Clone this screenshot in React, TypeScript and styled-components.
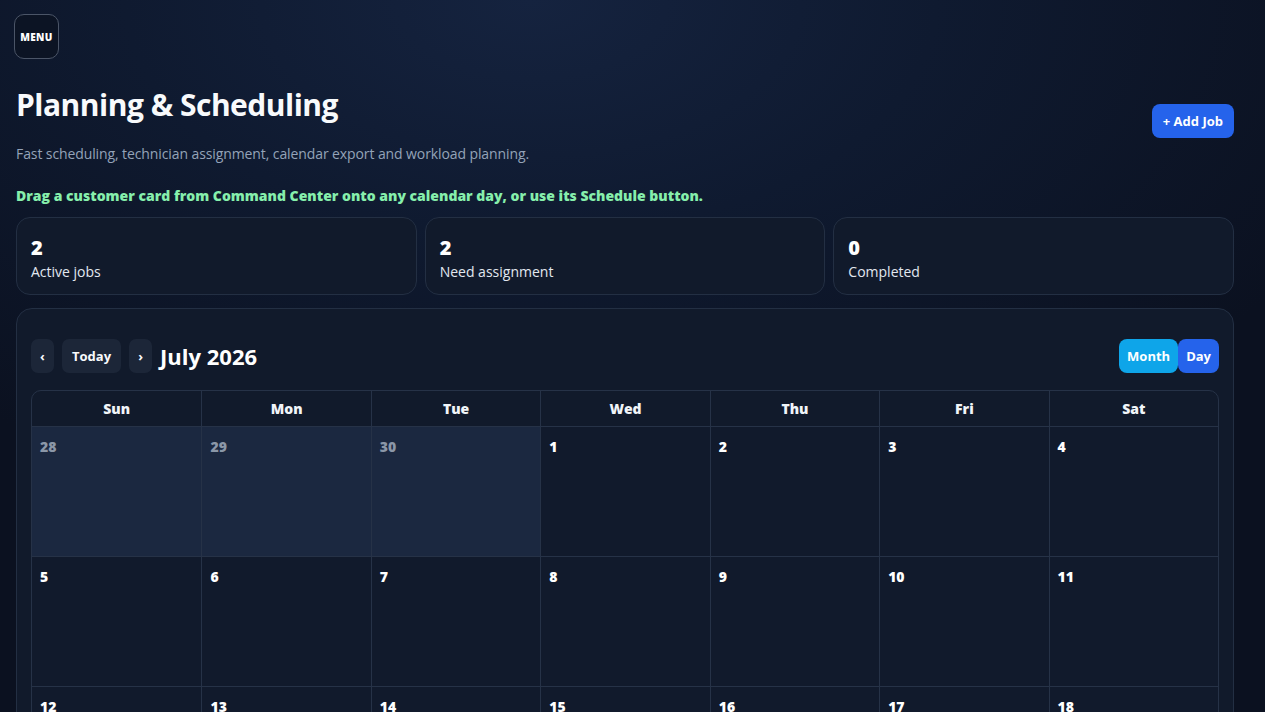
import React from 'react';
import styled, { createGlobalStyle } from 'styled-components';

const GlobalStyle = createGlobalStyle`
  html, body {
    margin: 0;
    padding: 0;
  }
  body {
    min-height: 100vh;
    background-color: #0b1120;
    background-image: radial-gradient(ellipse 900px 520px at 42% 0%, #15233f 0%, #0f1a30 45%, #0b1120 100%);
    background-repeat: no-repeat;
    color: #f1f5f9;
    font-family: 'Open Sans', 'Noto Sans', sans-serif;
  }
  * {
    box-sizing: border-box;
  }
`;

// right padding leaves room for the 15px page scrollbar of the reference
const Page = styled.div`
  min-height: 1440px;
  padding: 14px 31px 40px 16px;
`;

const MenuButton = styled.button`
  width: 45px;
  height: 45px;
  margin-left: -2px;
  border-radius: 10px;
  border: 1px solid #4b5567;
  background: #0c1424;
  color: #ffffff;
  font-family: 'Open Sans', sans-serif;
  font-weight: 800;
  font-size: 10px;
  letter-spacing: 0.3px;
  padding: 0;
`;

const Header = styled.header`
  display: flex;
  justify-content: space-between;
  align-items: flex-start;
  margin-top: 23px;
`;

const Title = styled.h1`
  margin: 0;
  font-size: 30px;
  font-weight: 700;
  line-height: 46px;
  color: #f8fafc;
  letter-spacing: -0.5px;
`;

const Subtitle = styled.p`
  margin: 16px 0 0;
  font-size: 14px;
  color: #94a3b8;
  line-height: 20px;
  letter-spacing: -0.1px;
`;

const Hint = styled.p`
  margin: 22px 0 0;
  font-size: 14px;
  font-weight: 800;
  color: #86efac;
  line-height: 20px;
`;

const PrimaryButton = styled.button`
  height: 34px;
  padding: 0 11px;
  border: none;
  border-radius: 8px;
  background: #2563eb;
  color: #ffffff;
  font-family: 'Open Sans', sans-serif;
  font-weight: 700;
  font-size: 13px;
  margin-top: 22px;
`;

const Stats = styled.div`
  display: grid;
  grid-template-columns: repeat(3, 1fr);
  gap: 8px;
  margin-top: 11px;
`;

const StatCard = styled.div`
  height: 78px;
  padding: 17px 14px 0;
  border-radius: 14px;
  border: 1px solid #232f43;
  background: #111a2b;
`;

const StatValue = styled.div`
  font-size: 20px;
  font-weight: 800;
  line-height: 26px;
  color: #ffffff;
`;

const StatLabel = styled.div`
  margin-top: 1px;
  font-size: 14px;
  line-height: 20px;
  color: #e2e8f0;
`;

const Panel = styled.section`
  margin-top: 13px;
  padding: 30px 14px 14px;
  border-radius: 16px;
  border: 1px solid #232f43;
  background: #111a2b;
`;

const Toolbar = styled.div`
  display: flex;
  align-items: center;
  justify-content: space-between;
`;

const NavGroup = styled.div`
  display: flex;
  align-items: center;
  gap: 8px;
`;

const NavButton = styled.button<{ $wide?: boolean }>`
  height: 34px;
  min-width: 23px;
  padding: ${p => (p.$wide ? '0 10px' : '0 8px')};
  border: none;
  border-radius: 7px;
  background: #1c2638;
  color: #f8fafc;
  font-family: 'Open Sans', sans-serif;
  font-weight: 700;
  font-size: 13px;
`;

const MonthTitle = styled.h2`
  margin: 0;
  font-size: 22px;
  font-weight: 700;
  color: #ffffff;
`;

const ViewToggle = styled.div`
  display: flex;
`;

const ViewButton = styled.button<{ $active?: boolean }>`
  height: 34px;
  padding: 0 8px;
  border: none;
  border-radius: 8px;
  background: ${p => (p.$active ? '#0ea5e9' : '#2563eb')};
  color: #ffffff;
  font-family: 'Open Sans', sans-serif;
  font-weight: 700;
  font-size: 13px;
`;

const Grid = styled.div`
  margin-top: 17px;
  display: grid;
  grid-template-columns: repeat(7, 1fr);
  border: 1px solid #263247;
  border-radius: 10px;
  overflow: hidden;
`;

const HeadCell = styled.div`
  height: 36px;
  display: flex;
  align-items: center;
  justify-content: center;
  font-size: 14px;
  font-weight: 800;
  color: #f1f5f9;
  border-left: 1px solid #263247;
  border-bottom: 1px solid #263247;
  &:nth-child(7n + 1) {
    border-left: none;
  }
`;

const DayCell = styled.div<{ $outside?: boolean }>`
  height: 130px;
  padding: 8px 8px;
  background: ${p => (p.$outside ? '#1b2840' : '#111a2c')};
  border-left: 1px solid #263247;
  border-bottom: 1px solid #263247;
  &:nth-child(7n + 1) {
    border-left: none;
  }
`;

const DayNumber = styled.span<{ $outside?: boolean }>`
  font-size: 14px;
  font-weight: 800;
  color: ${p => (p.$outside ? '#8b97a8' : '#ffffff')};
`;

const weekdays = ['Sun', 'Mon', 'Tue', 'Wed', 'Thu', 'Fri', 'Sat'];

const buildDays = () => {
  const days: { day: number; outside: boolean }[] = [];
  [28, 29, 30].forEach(d => days.push({ day: d, outside: true }));
  for (let d = 1; d <= 31; d++) days.push({ day: d, outside: false });
  days.push({ day: 1, outside: true });
  return days;
};

const stats = [
  { value: 2, label: 'Active jobs' },
  { value: 2, label: 'Need assignment' },
  { value: 0, label: 'Completed' },
];

const App = () => (
  <>
    <GlobalStyle />
    <Page>
      <MenuButton>MENU</MenuButton>
      <Header>
        <div>
          <Title>Planning &amp; Scheduling</Title>
          <Subtitle>
            Fast scheduling, technician assignment, calendar export and workload planning.
          </Subtitle>
        </div>
        <PrimaryButton>+ Add Job</PrimaryButton>
      </Header>
      <Hint>Drag a customer card from Command Center onto any calendar day, or use its Schedule button.</Hint>
      <Stats>
        {stats.map(s => (
          <StatCard key={s.label}>
            <StatValue>{s.value}</StatValue>
            <StatLabel>{s.label}</StatLabel>
          </StatCard>
        ))}
      </Stats>
      <Panel>
        <Toolbar>
          <NavGroup>
            <NavButton>‹</NavButton>
            <NavButton $wide>Today</NavButton>
            <NavButton>›</NavButton>
            <MonthTitle>July 2026</MonthTitle>
          </NavGroup>
          <ViewToggle>
            <ViewButton $active>Month</ViewButton>
            <ViewButton>Day</ViewButton>
          </ViewToggle>
        </Toolbar>
        <Grid>
          {weekdays.map(w => (
            <HeadCell key={w}>{w}</HeadCell>
          ))}
          {buildDays().map((d, i) => (
            <DayCell key={i} $outside={d.outside}>
              <DayNumber $outside={d.outside}>{d.day}</DayNumber>
            </DayCell>
          ))}
        </Grid>
      </Panel>
    </Page>
  </>
);

export default App;
